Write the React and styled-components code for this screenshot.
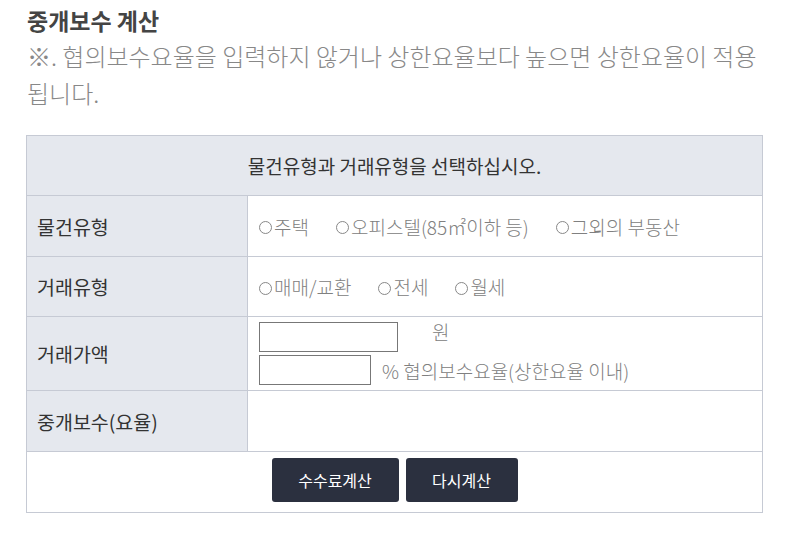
import React from 'react';
import styled, { createGlobalStyle } from 'styled-components';

const GlobalStyle = createGlobalStyle`
  body {
    margin: 0;
    background: #fff;
    font-family: "Noto Sans CJK KR", "Noto Sans", sans-serif;
  }
`;

const propertyTypes = ['주택', '오피스텔(85㎡이하 등)', '그외의 부동산'];
const dealTypes = ['매매/교환', '전세', '월세'];

function App() {
  return (
    <Page>
      <GlobalStyle />
      <Title>중개보수 계산</Title>
      <Notice>※. 협의보수요율을 입력하지 않거나 상한요율보다 높으면 상한요율이 적용 됩니다.</Notice>
      <CalcTable>
        <colgroup>
          <col style={{ width: 221 }} />
          <col />
        </colgroup>
        <tbody>
          <Row $h={60}>
            <HeadCell colSpan={2}>물건유형과 거래유형을 선택하십시오.</HeadCell>
          </Row>
          <Row $h={61}>
            <Label>물건유형</Label>
            <Value>
              <Options>
                {propertyTypes.map((t) => (
                  <Option key={t}>
                    <Mark />
                    {t}
                  </Option>
                ))}
              </Options>
            </Value>
          </Row>
          <Row $h={60}>
            <Label>거래유형</Label>
            <Value>
              <Options>
                {dealTypes.map((t) => (
                  <Option key={t}>
                    <Mark />
                    {t}
                  </Option>
                ))}
              </Options>
            </Value>
          </Row>
          <Row $h={74}>
            <Label>거래가액</Label>
            <Value>
              <InputLine>
                <Field $w={139} />
                <Unit $gap={34} $up={6}>원</Unit>
              </InputLine>
              <InputLine>
                <Field $w={112} />
                <Unit $gap={11} $up={-2}>% 협의보수요율(상한요율 이내)</Unit>
              </InputLine>
            </Value>
          </Row>
          <Row $h={61}>
            <Label>중개보수(요율)</Label>
            <Value />
          </Row>
          <Row $h={61}>
            <ButtonCell colSpan={2}>
              <Buttons>
                <DarkButton $w={127}>수수료계산</DarkButton>
                <DarkButton $w={112}>다시계산</DarkButton>
              </Buttons>
            </ButtonCell>
          </Row>
        </tbody>
      </CalcTable>
    </Page>
  );
}

export default App;

const Page = styled.div`
  padding: 3px 26px 0 26px;
  width: 737px;
`;

const Title = styled.h2`
  margin: 0 0 0 1px;
  font-size: 23px;
  line-height: 34px;
  font-weight: 700;
  color: #444;
`;

const Notice = styled.p`
  margin: 0 0 24px 1px;
  font-size: 24px;
  line-height: 37px;
  font-weight: 300;
  color: #888;
`;

const CalcTable = styled.table`
  width: 737px;
  border-collapse: collapse;
  table-layout: fixed;
  border: 1px solid #c6cad4;
`;

const Row = styled.tr`
  height: ${(p) => p.$h}px;
`;

const HeadCell = styled.td`
  background: #e5e8ee;
  border-bottom: 1px solid #c6cad4;
  text-align: center;
  font-size: 19px;
  color: #333;
  padding: 0;
`;

const Label = styled.td`
  background: #e5e8ee;
  border-bottom: 1px solid #c6cad4;
  border-right: 1px solid #c6cad4;
  padding: 0 0 0 10px;
  font-size: 19.5px;
  color: #333;
`;

const Value = styled.td`
  border-bottom: 1px solid #c6cad4;
  padding: 0 0 0 11px;
`;

const Options = styled.div`
  display: flex;
  gap: 27px;
`;

const Option = styled.span`
  display: inline-flex;
  align-items: center;
  font-size: 19px;
  font-weight: 300;
  color: #808080;
  white-space: nowrap;
`;

const Mark = styled.span`
  display: inline-block;
  box-sizing: border-box;
  width: 13px;
  height: 13px;
  margin: 3px 2px 0 0;
  border: 1.3px solid #888;
  border-radius: 50%;
`;

const InputLine = styled.div`
  display: flex;
  align-items: center;
  height: 33px;
`;

const Field = styled.input`
  box-sizing: border-box;
  width: ${(p) => p.$w}px;
  height: 30px;
  margin: 0;
  border: 1px solid #777;
  border-radius: 0;
  background: #fff;
`;

const Unit = styled.span`
  margin-left: ${(p) => p.$gap}px;
  position: relative;
  top: -${(p) => p.$up}px;
  font-size: 19px;
  font-weight: 300;
  color: #808080;
  white-space: nowrap;
`;

const ButtonCell = styled.td`
  padding: 0;
`;

const Buttons = styled.div`
  display: flex;
  justify-content: center;
  gap: 7px;
  padding: 2px 0 7px;
`;

const DarkButton = styled.button`
  width: ${(p) => p.$w}px;
  height: 44px;
  border: none;
  border-radius: 3px;
  background: #2b303f;
  color: #fff;
  font-family: "Noto Sans CJK KR", sans-serif;
  font-size: 16px;
  cursor: pointer;
`;
